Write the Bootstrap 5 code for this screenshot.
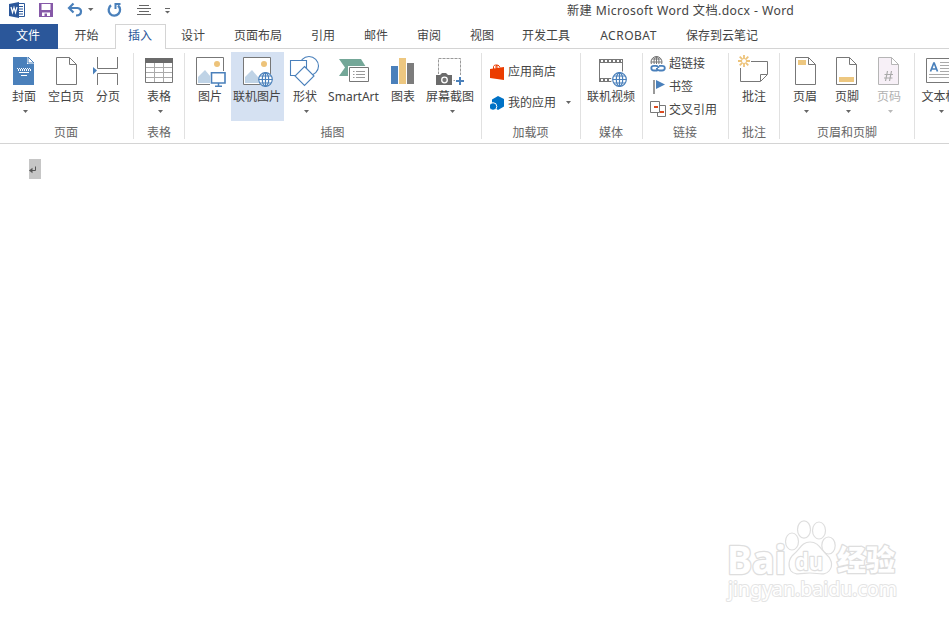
<!DOCTYPE html>
<html lang="zh-CN">
<head>
<meta charset="utf-8">
<meta name="viewport" content="width=device-width, initial-scale=1">
<title>新建 Microsoft Word 文档.docx - Word</title>
<link href="https://cdn.jsdelivr.net/npm/bootstrap@5.3.0/dist/css/bootstrap.min.css" rel="stylesheet">
<style>
body{font:12px/16px "Noto Sans","Noto Sans CJK SC",sans-serif;color:#444;background:#fff;overflow:hidden;height:622px}
svg{display:block;flex:none}
.titlebar{height:24px}
.doc-title{margin-left:397px;font-size:12.2px;letter-spacing:.4px;line-height:22px}
.tabs{height:25px;border-bottom:1px solid #d4d4d4;--bs-nav-link-padding-x:0;--bs-nav-link-padding-y:0}
.tabs .nav-link{width:54px;height:25px;line-height:23px;font-size:12px;color:#444;text-align:center;border-radius:0}
.tabs .file{width:58px;background:#2b579a;color:#fff;padding-right:2px}
.tabs .start{width:57px}
.tabs .nav-link.active{width:51px;background:#fff;border:1px solid #d4d4d4;border-bottom:0;color:#2b579a;line-height:21px;padding-right:1px}
.tabs .four{width:76px}.tabs .two{width:52px}.tabs .acro{width:89px;letter-spacing:.5px}.tabs .save{width:98px}
.ribbon{height:95px;padding-top:4px;border-bottom:1px solid #d4d4d4;overflow:hidden}
.grp{flex:none;height:86px;border-right:1px solid #e1e1e1}
.tools{height:70px;margin-top:-1px}
.tool{width:42px;height:69px}
.tool svg{height:36px;margin-top:1px}
.tool .cap{height:17px;line-height:17px;margin-top:-1px}
.caret{width:5px;height:3px;background:#666;clip-path:polygon(0 0,100% 0,50% 100%)}
.tool .caret{margin:5px 0 0 3px}
.grp-name{height:17px;line-height:22px;color:#666;margin-left:-1px}
.g-page{width:134px;padding-left:3px}.g-page .grp-name{margin-left:-4px}
.g-table{width:51px}.g-table .grp-name{margin-left:0}
.g-art{width:297px;padding-left:4px}.g-art .grp-name{margin-left:-5px}
.w53{width:53px}.w55{width:55px}.w44{width:44px}.w50{width:50px}
.w50 .caret{margin-left:5px}
.picked{background:#d5e1f2}
.picked .cap{margin-left:-1px}
.g-apps{width:99px}
.app-row{height:31px;padding-left:8px;gap:4px}
.app-row .caret{margin-right:9px}
.g-media{width:62px}.g-media .tools{padding-right:1px}.g-link{width:86px}
.link-row{height:23px;padding-left:7px;gap:3px}
.g-note{width:51px}.g-note .grp-name{margin-left:0}
.g-head{width:135px;padding-left:4px}.g-head .grp-name{margin-left:-4px}
.g-text{width:49px}.g-text .cap{margin-left:1px}.g-text .caret{margin-left:5px}
.off .cap{color:#b1b1b1}.off .caret{background:#b9b9b9}
.page{padding:15px 0 0 29px}
.pilcrow{width:12px;height:20px;background:#c6c6c6}
.watermark{left:720px;top:512px}
</style>
<script src="https://cdn.jsdelivr.net/npm/bootstrap@5.3.0/dist/js/bootstrap.bundle.min.js"></script>
</head>
<body>
<svg width="0" height="0" class="position-absolute" aria-hidden="true"><defs>
<g id="globe"><circle r="7.5" fill="#fff"/><g fill="none" stroke="#4a80bb" stroke-width="1.2"><circle r="6.8"/><ellipse rx="3.2" ry="6.8"/><path d="M0-7V7M-6.8 0H6.8M-5.8-3.5H5.8M-5.8 3.5H5.8"/></g></g>
<g id="photo"><path d="M.5.500H27.500V27.500H.500Z" fill="#fff" stroke="#777"/><path d="M2 26V20L9 13L20 26Z" fill="#bfd3e6"/><circle cx="21" cy="7" r="3" fill="#edc37a"/></g>
<path id="sheet" d="M.500.500H13.500L20.500 7.500V27.500H.500ZM13.500.500V7.500H20.500"/>
</defs></svg>

<header class="titlebar d-flex align-items-start">
<svg width="170" height="22" viewBox="0 0 170 22">
<path d="M18 3.500H24.500V16.500H18" fill="#fff" stroke="#2b579a"/><path d="M19 6.500H23M19 9H23M19 11.500H23M19 14H23" stroke="#2b579a"/><path d="M9 4L19 2V18L9 16Z" fill="#2b579a"/><path d="M11 7L12.500 12.500L14 7.500L15.500 12.500L17 7" fill="none" stroke="#fff" stroke-width="1.200"/>
<path d="M39 3H53V17H39Z" fill="#8659a8"/><path d="M41.500 4H50.500V10H41.500ZM42 12.500H50V16H47V13.500H44.500V16H42Z" fill="#fff"/>
<path d="M69.500 8H77.500Q81 8.500 81 11.500Q81 15.500 76 15.500" fill="none" stroke="#4a80bb" stroke-width="2.200"/><path d="M73.500 3.500L69 8L73.500 12.500" fill="none" stroke="#4a80bb" stroke-width="2.200"/><path d="M88 8H93.500L90.700 11Z" fill="#666"/>
<path d="M111 5.300A5.700 5.700 0 1 0 118 5.500" fill="none" stroke="#4a80bb" stroke-width="2.300"/><path d="M120.500 4H115.500V9" fill="none" stroke="#4a80bb" stroke-width="2"/>
<path d="M139 5.500H149M137 8.500H151M139 11.500H149M137 14.500H151" stroke="#666"/><path d="M165 8.500H170" stroke="#666"/><path d="M165 11H170L167.500 13.500Z" fill="#666"/>
</svg>
<div class="doc-title text-nowrap">新建 Microsoft Word 文档.docx - Word</div>
</header>

<nav class="tabs nav flex-nowrap text-nowrap">
<a class="nav-link file">文件</a><a class="nav-link start">开始</a><a class="nav-link active">插入</a><a class="nav-link">设计</a><a class="nav-link four">页面布局</a><a class="nav-link">引用</a><a class="nav-link two">邮件</a><a class="nav-link">审阅</a><a class="nav-link two">视图</a><a class="nav-link four">开发工具</a><a class="nav-link acro">ACROBAT</a><a class="nav-link save">保存到云笔记</a>
</nav>

<main>
<section class="ribbon d-flex text-nowrap">
<div class="grp g-page">
 <div class="tools d-flex">
  <div class="tool d-flex flex-column align-items-center"><svg width="42" viewBox="3 53 42 36"><path d="M13 57H27V64H34V85H13Z" fill="#4a80bb"/><path d="M28 57V63H34Z" fill="#fff" stroke="#4a80bb"/><path d="M17 68.500H31M18 70.500H31" stroke="#fff" stroke-dasharray="1 1"/><path d="M17 69.500H31" stroke="#fff" stroke-dasharray="1 1" stroke-dashoffset="1"/><path d="M19 72.500H29M21 75.500H27" stroke="#fff"/></svg><div class="cap">封面</div><i class="caret"></i></div>
  <div class="tool d-flex flex-column align-items-center"><svg width="42" viewBox="45 53 42 36"><use href="#sheet" x="56" y="57" fill="#fff" stroke="#777"/></svg><div class="cap">空白页</div></div>
  <div class="tool d-flex flex-column align-items-center"><svg width="42" viewBox="87 53 42 36"><path d="M97.500 57V68.500H117.500V57M97.500 85V73.500H117.500V85" fill="none" stroke="#777"/><path d="M93 67L97 70.500L93 74.500Z" fill="#4a80bb"/></svg><div class="cap">分页</div></div>
 </div><div class="grp-name text-center">页面</div>
</div>
<div class="grp g-table">
 <div class="tools d-flex justify-content-center"><div class="tool d-flex flex-column align-items-center"><svg width="42" viewBox="138 53 42 36"><path d="M145.500 58.500H172.500V82.500H145.500Z" fill="#fff" stroke="#777"/><path d="M154.500 63V82M163.500 63V82M146 67.500H172M146 72.500H172M146 77.500H172" stroke="#aaa"/><path d="M145 58H173V63H145Z" fill="#6b6b6b"/></svg><div class="cap">表格</div><i class="caret"></i></div></div>
 <div class="grp-name text-center">表格</div>
</div>
<div class="grp g-art">
 <div class="tools d-flex">
  <div class="tool d-flex flex-column align-items-center"><svg width="42" viewBox="189 53 42 36"><use href="#photo" x="196" y="57"/><path d="M210 71H227V87H210Z" fill="#fff"/><path d="M211.500 72.800H225V83H211.500Z" fill="#fff" stroke="#4a80bb" stroke-width="1.600"/><path d="M218.500 83V86M215 86.300H222" stroke="#4a80bb" stroke-width="1.500"/></svg><div class="cap">图片</div></div>
  <div class="tool w53 picked d-flex flex-column align-items-center"><svg width="53" viewBox="231 53 53 36"><use href="#photo" x="243" y="57"/><use href="#globe" x="265.500" y="79.500"/></svg><div class="cap">联机图片</div></div>
  <div class="tool d-flex flex-column align-items-center"><svg width="42" viewBox="284 53 42 36"><g fill="#fff" stroke="#4a80bb" stroke-width="1.100"><circle cx="309" cy="66" r="9.500"/><path d="M290.500 60.500H306.500V75.500H290.500Z"/><path d="M304.500 66.500L314 76L304.500 85.500L295 76Z"/></g></svg><div class="cap">形状</div><i class="caret"></i></div>
  <div class="tool w55 d-flex flex-column align-items-center"><svg width="55" viewBox="326 53 55 36"><path d="M339 59H361L366 67L361 76H339L345 67.500Z" fill="#74a798"/><path d="M348 66H370V84H348Z" fill="#fff"/><path d="M349.500 67.500H368.500V81.500H349.500Z" fill="#fff" stroke="#777"/><path d="M353 71.500H354.500M356 71.500H365M353 74.500H354.500M356 74.500H365M353 77.500H354.500M356 77.500H365" stroke="#999"/></svg><div class="cap">SmartArt</div></div>
  <div class="tool w44 d-flex flex-column align-items-center"><svg width="44" viewBox="381 53 44 36"><path d="M391 66H398V84H391Z" fill="#4a80bb"/><path d="M399 58H406V84H399Z" fill="#edc780"/><path d="M407 63H414V84H407Z" fill="#7c7c7c"/></svg><div class="cap">图表</div></div>
  <div class="tool w50 d-flex flex-column align-items-center"><svg width="50" viewBox="425 53 50 36"><path d="M438.500 58.500H460.500V80.500H438.500Z" fill="#fff" stroke="#999" stroke-dasharray="3 1"/><path d="M435 74H453V87H435ZM455 75H465V87H455Z" fill="#fff"/><path d="M436 75H440L442 73H446L448 75H452V85H436Z" fill="#6b6b6b"/><circle cx="444.500" cy="80" r="2.800" fill="#777" stroke="#fff" stroke-width="1.300"/><path d="M460 77V85M456 81H464" stroke="#4a80bb" stroke-width="2"/></svg><div class="cap">屏幕截图</div><i class="caret"></i></div>
 </div><div class="grp-name text-center">插图</div>
</div>
<div class="grp g-apps">
 <div class="tools pt-1">
  <div class="app-row d-flex align-items-center"><svg width="14" height="16" viewBox="490 63 14 16"><path d="M490 68L504 66V79L490 77Z" fill="#eb3c00"/><path d="M493.500 68V65.500Q494 63.500 497 64V68M496 67V65Q498 62.500 500 66.500" fill="none" stroke="#eb3c00"/></svg><span>应用商店</span></div>
  <div class="app-row d-flex align-items-center"><svg width="14" height="14" viewBox="490 95 14 14"><path d="M492 98.500L498 95L504 98V105.500L498 109L492 105Z" fill="#0072c6"/><circle cx="493" cy="105.500" r="3.800" fill="#0072c6" stroke="#fff"/></svg><span>我的应用</span><i class="caret ms-auto"></i></div>
 </div><div class="grp-name text-center">加载项</div>
</div>
<div class="grp g-media">
 <div class="tools d-flex justify-content-center"><div class="tool w50 d-flex flex-column align-items-center"><svg width="50" viewBox="586 53 50 36"><path d="M599 59H623V82H599Z" fill="#777"/><path d="M600 63H622V78H600Z" fill="#fff"/><path d="M601 61H622M601 80H622" stroke="#fff" stroke-width="2" stroke-dasharray="2 2"/><circle cx="619.500" cy="79.500" r="8.500" fill="#fff"/><use href="#globe" x="619.500" y="79.500"/></svg><div class="cap">联机视频</div></div></div>
 <div class="grp-name text-center">媒体</div>
</div>
<div class="grp g-link">
 <div class="tools">
  <div class="link-row d-flex align-items-center"><svg width="16" height="18" viewBox="650 54 16 18"><g fill="none" stroke="#777"><circle cx="656.500" cy="61" r="5.500"/><ellipse cx="656.500" cy="61" rx="2.500" ry="5.500"/><path d="M651 61H662M652 58H661M656.500 55V66"/></g><path d="M650 63H666V72H650Z" fill="#fff"/><path d="M657.500 69.500H654Q651.300 69.500 651.300 67Q651.300 64.800 654 64.800H656Q658.500 65 658.500 67M656.800 67Q657 69.500 659.500 69.500H662Q664.800 69.500 664.800 67Q664.800 64.800 662 64.800H659" fill="none" stroke="#4a80bb" stroke-width="1.800"/></svg><span>超链接</span></div>
  <div class="link-row d-flex align-items-center"><svg width="16" height="16" viewBox="650 78 16 16"><path d="M654 79V93" stroke="#777" stroke-width="1.500"/><path d="M656 79L665 83.500L656 88Z" fill="#4a80bb"/></svg><span>书签</span></div>
  <div class="link-row d-flex align-items-center"><svg width="16" height="17" viewBox="650 101 16 17"><path d="M657.500 105.500H665.500V116.500H657.500Z" fill="#fff" stroke="#777"/><path d="M650.500 101.500H659.500V112.500H650.500Z" fill="#fff" stroke="#777"/><path d="M654 107H658M660 112H664" stroke="#dc4b1f" stroke-width="2"/></svg><span>交叉引用</span></div>
 </div><div class="grp-name text-center">链接</div>
</div>
<div class="grp g-note">
 <div class="tools d-flex justify-content-center"><div class="tool d-flex flex-column align-items-center"><svg width="42" viewBox="733 53 42 36"><path d="M751 61.500H767.500V74.500L760.500 81.500H740.500V68M760.500 81V74.500H767" fill="none" stroke="#777"/><path d="M744 55V67M738 61H750M739.700 56.700L748.300 65.300M748.300 56.700L739.700 65.300" stroke="#edc37a" stroke-width="1.800"/><circle cx="744" cy="61" r="2" fill="#fff"/></svg><div class="cap">批注</div></div></div>
 <div class="grp-name text-center">批注</div>
</div>
<div class="grp g-head">
 <div class="tools d-flex">
  <div class="tool d-flex flex-column align-items-center"><svg width="42" viewBox="784 53 42 36"><use href="#sheet" x="795" y="57" fill="#fff" stroke="#777"/><path d="M798 60H806V65H798Z" fill="#edc780"/></svg><div class="cap">页眉</div><i class="caret"></i></div>
  <div class="tool d-flex flex-column align-items-center"><svg width="42" viewBox="826 53 42 36"><use href="#sheet" x="836" y="57" fill="#fff" stroke="#777"/><path d="M839 77H854V82H839Z" fill="#edc780"/></svg><div class="cap">页脚</div><i class="caret"></i></div>
  <div class="tool off d-flex flex-column align-items-center"><svg width="42" viewBox="868 53 42 36"><use href="#sheet" x="878" y="57" fill="#f7f0f7" stroke="#b5b5b5"/><path d="M887.500 71L885.500 81M891.500 71L889.500 81M884.500 74.500H893M884 78H892.500" stroke="#aaa" stroke-width="1.200"/></svg><div class="cap">页码</div><i class="caret"></i></div>
 </div><div class="grp-name text-center">页眉和页脚</div>
</div>
<div class="grp g-text">
 <div class="tools d-flex justify-content-center"><div class="tool d-flex flex-column align-items-center"><svg width="42" viewBox="918 53 42 36"><path d="M926.500 58.500H954.500V82.500H926.500Z" fill="#fff" stroke="#777"/><path d="M940 62.500H952M940 65.500H952M940 68.500H952M940 71.500H952M929 74.500H952M929 77.500H952" stroke="#aaa"/><path d="M930.500 71.500L933.800 63H934.200L937.500 71.500M931.700 69H936.300" fill="none" stroke="#4a80bb" stroke-width="1.700"/></svg><div class="cap">文本框</div><i class="caret"></i></div></div>
</div>
</section>

<section class="page">
<div class="pilcrow"><svg width="12" height="20" viewBox="0 -1 12 20"><path d="M6.500 6.500V10.500H2" fill="none" stroke="#555"/><path d="M0 10.500L3.500 7.800V13.200Z" fill="#555"/></svg></div>
</section>
</main>

<svg class="watermark position-absolute" width="190" height="95" viewBox="720 512 190 95">
<g fill="#fff" stroke="#dedede" stroke-width="1.200" stroke-linejoin="round">
<g font-family="'Noto Sans','Noto Sans CJK SC',sans-serif" font-weight="700" stroke-width="2.600" paint-order="stroke">
<text x="727" y="573.500" font-size="38.500" textLength="59" lengthAdjust="spacingAndGlyphs">Bai</text>
<text x="837" y="571" font-size="29" textLength="58" font-weight="900">经验</text>
</g>
<ellipse cx="792" cy="541.500" rx="6.500" ry="8.500"/><ellipse cx="804" cy="529.500" rx="6.500" ry="8.700"/><ellipse cx="819" cy="530.500" rx="6.500" ry="8.500"/><ellipse cx="828.500" cy="545.500" rx="6.700" ry="8.500"/>
<path d="M810 542C802 542 800 549 794 554C788 559 788 567 791 571C795 576 803 573 810 573C818 573 825 576 829 571C834 565 831 558 826 554C820 548 818 542 810 542Z"/>
<text x="795" y="569.500" font-family="'Noto Sans',sans-serif" font-weight="700" font-size="24" textLength="28" lengthAdjust="spacingAndGlyphs" stroke-width="2.400" paint-order="stroke">du</text>
<text x="728" y="595.500" font-family="'Noto Sans',sans-serif" font-size="19.500" textLength="169" lengthAdjust="spacingAndGlyphs" stroke-width="2" stroke="#e4e4e4" paint-order="stroke">jingyan.baidu.com</text>
</g>
</svg>
</body>
</html>
